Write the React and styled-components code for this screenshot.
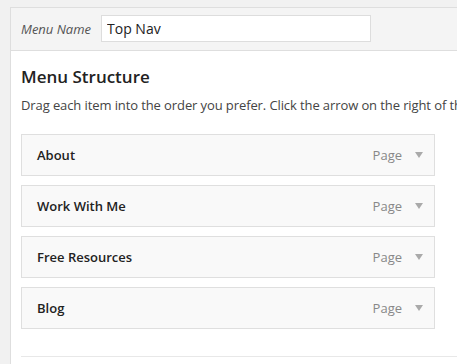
import React from "react";
import styled, { createGlobalStyle } from "styled-components";

const Global = createGlobalStyle`
  html, body { margin: 0; padding: 0; background: #f1f1f1; overflow: hidden; }
  body { font-family: "Open Sans", "Liberation Sans", sans-serif; color: #444; }
  * { box-sizing: border-box; }
`;

const Page = styled.div`
  padding: 7px 0 0 10px;
  width: 457px;
  height: 364px;
  overflow: hidden;
`;

const Panel = styled.div`
  border: 1px solid #dedede;
  border-right: none;
  background: #fff;
  height: 400px;
`;

const Header = styled.div`
  display: flex;
  align-items: center;
  gap: 10px;
  height: 43px;
  padding: 0 10px 1px;
  background: #f4f4f4;
  border-bottom: 1px solid #dedede;
`;

const Label = styled.label`
  font-style: italic;
  font-size: 13px;
  color: #555;
  width: 70px;
`;

const NameInput = styled.input`
  width: 270px;
  height: 27px;
  border: 1px solid #ddd;
  background: #fff;
  font-family: inherit;
  font-size: 14px;
  color: #222;
  padding: 0 5px;
  outline: none;
`;

const Body = styled.div`
  padding: 15px 0 0 10px;
`;

const Title = styled.h3`
  margin: 0;
  font-size: 17px;
  font-weight: 600;
  line-height: 22px;
  color: #222;
`;

const Desc = styled.p`
  margin: 8px 0 0;
  font-size: 13px;
  line-height: 19.5px;
  letter-spacing: -0.1px;
  color: #444;
  white-space: nowrap;
  overflow: hidden;
`;

const List = styled.div`
  display: flex;
  flex-direction: column;
  gap: 9px;
  margin-top: 18px;
  width: 414px;
`;

const Item = styled.div`
  display: flex;
  align-items: center;
  height: 42px;
  padding: 0 11px 0 15px;
  background: #f9f9f9;
  border: 1px solid #dfdfdf;
`;

const ItemTitle = styled.span`
  flex: 1;
  font-size: 13px;
  font-weight: 600;
  color: #222;
`;

const ItemType = styled.span`
  font-size: 13px;
  color: #888;
  margin-right: 13px;
`;

const Arrow = styled.span`
  width: 0;
  height: 0;
  border-left: 4px solid transparent;
  border-right: 4px solid transparent;
  border-top: 6px solid #aaa;
  margin-top: 1px;
`;

const Divider = styled.div`
  margin-top: 27px;
  border-top: 1px solid #e8e8e8;
`;

const items = ["About", "Work With Me", "Free Resources", "Blog"];

export default function App() {
  return (
    <>
      <Global />
      <Page>
        <Panel>
          <Header>
            <Label>Menu Name</Label>
            <NameInput defaultValue="Top Nav" />
          </Header>
          <Body>
            <Title>Menu Structure</Title>
            <Desc>
              Drag each item into the order you prefer. Click the arrow on the right of the item to reveal additional configuration options.
            </Desc>
            <List>
              {items.map((t) => (
                <Item key={t}>
                  <ItemTitle>{t}</ItemTitle>
                  <ItemType>Page</ItemType>
                  <Arrow />
                </Item>
              ))}
            </List>
            <Divider />
          </Body>
        </Panel>
      </Page>
    </>
  );
}
